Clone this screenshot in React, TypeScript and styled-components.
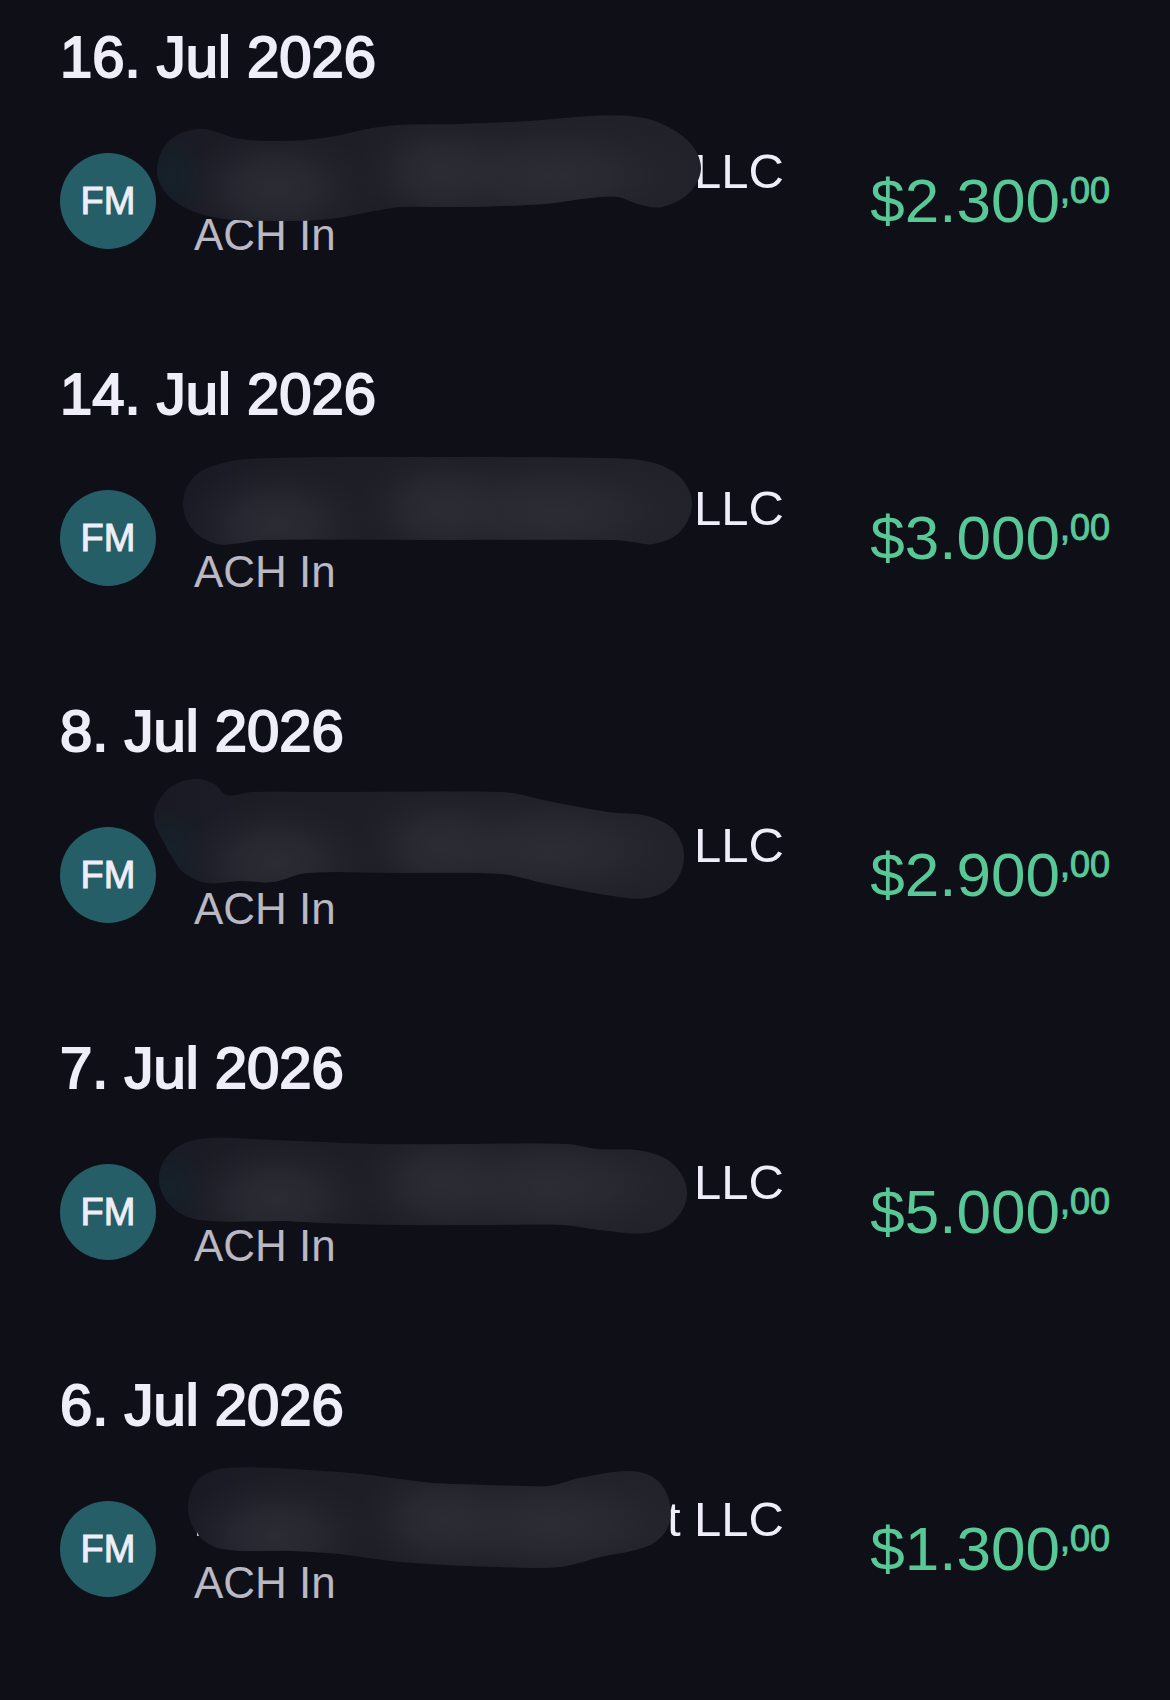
import React from "react";
import styled, { createGlobalStyle } from "styled-components";

const GlobalStyle = createGlobalStyle`
  *, *::before, *::after { box-sizing: border-box; }
  html { background: #0f0f18; }
  body {
    margin: 0;
    background: #0f0f18;
    color: #eeedf8;
    font-family: "Liberation Sans", Arial, Helvetica, sans-serif;
  }
`;

const Feed = styled.main`
  display: flex;
  flex-direction: column;
  gap: 94px;
  min-height: 100vh;
  padding: 25px 60px 40px;
`;

const Day = styled.section`
  display: flex;
  flex-direction: column;
  gap: 45px;
`;

const DayTitle = styled.h2`
  margin: 0;
  font-size: 58px;
  line-height: 64px;
  font-weight: 400;
  -webkit-text-stroke: 2px currentColor;
`;

const Transaction = styled.article`
  position: relative;
  display: flex;
  align-items: center;
  gap: 38px;
`;

const Avatar = styled.span`
  display: grid;
  place-items: center;
  flex: none;
  width: 96px;
  height: 96px;
  border-radius: 50%;
  background: #265e68;
  font-size: 38px;
  line-height: 44px;
  -webkit-text-stroke: 1px currentColor;
`;

const Details = styled.div`
  flex: 0 1 590px;
  padding-top: 6px;
  white-space: nowrap;
`;

const Payer = styled.p`
  margin: 0;
  font-size: 49px;
  line-height: 62px;
  text-align: right;
`;

const Method = styled.p`
  margin: 0;
  color: #b9b8c3;
  font-size: 44px;
  line-height: 66px;
`;

const Amount = styled.p`
  display: flex;
  align-items: flex-start;
  margin: 0 0 0 auto;
  color: #57c896;
  font-size: 62px;
  line-height: 62px;
`;

const Cents = styled.span`
  font-size: 36px;
  line-height: 42px;
  -webkit-text-stroke: 1px currentColor;
`;

const Smudge = styled.svg`
  position: absolute;
  left: 90px;
  top: -34px;
  width: 560px;
  height: 140px;
  pointer-events: none;
`;

type Point = [number, number];

interface Entry {
  date: string;
  payer: string;
  whole: string;
  tinted: boolean;
  outline: Point[];
  speck?: string;
}

const entries: Entry[] = [
  {
    date: "16. Jul 2026",
    payer: "LLC",
    whole: "$2.300",
    tinted: true,
    outline: [
      [157, 170], [169, 141], [200, 129], [240, 139], [282, 141], [323, 138], [387, 126], [460, 124], [530, 121],
      [590, 116], [630, 116], [660, 123], [690, 143], [701, 168], [690, 192], [662, 207], [638, 204],
      [618, 197], [590, 198], [545, 204], [465, 207], [400, 207], [380, 210], [330, 219], [280, 221],
      [225, 219], [190, 210], [166, 193],
    ],
  },
  {
    date: "14. Jul 2026",
    payer: "LLC",
    whole: "$3.000",
    tinted: false,
    outline: [
      [183, 166], [195, 139], [227, 125], [273, 121], [400, 120], [600, 121], [650, 125], [680, 140],
      [692, 166], [680, 195], [653, 207], [633, 205], [615, 203], [450, 203], [260, 203], [240, 206],
      [217, 207], [193, 193],
    ],
  },
  {
    date: "8. Jul 2026",
    payer: "LLC",
    whole: "$2.900",
    tinted: true,
    outline: [
      [154, 143], [167, 116], [193, 105], [214, 110], [227, 121], [253, 118], [340, 118], [500, 118], [523, 121],
      [543, 126], [607, 138], [647, 142], [674, 156], [684, 183], [673, 211], [647, 224], [613, 222],
      [543, 209], [510, 201], [480, 199], [400, 199], [307, 199], [273, 208], [240, 207], [207, 209],
      [183, 198], [172, 183], [166, 172],
    ],
  },
  {
    date: "7. Jul 2026",
    payer: "LLC",
    whole: "$5.000",
    tinted: true,
    outline: [
      [159, 169], [170, 142], [200, 128], [273, 129], [373, 133], [470, 133], [567, 133], [597, 138],
      [643, 140], [673, 153], [687, 181], [675, 209], [647, 222], [600, 219], [563, 214], [480, 214],
      [400, 214], [323, 212], [287, 210], [200, 209], [172, 196],
    ],
  },
  {
    date: "6. Jul 2026",
    payer: "t LLC",
    whole: "$1.300",
    tinted: false,
    speck: "M197 184l2 4h-2z",
    outline: [
      [188, 160], [198, 132], [227, 120], [340, 124], [407, 132], [433, 135], [523, 138], [550, 138],
      [580, 130], [630, 123], [657, 132], [670, 156], [667, 181], [648, 198], [600, 209], [560, 219],
      [500, 219], [400, 214], [340, 206], [293, 203], [223, 201], [198, 187],
    ],
  },
];

// Closed Catmull-Rom curve through the outline points.
function smoothPath(points: Point[]): string {
  const n = points.length;
  const at = (i: number) => points[(i + n) % n];
  let d = `M${points[0].join(" ")}`;
  for (let i = 0; i < n; i++) {
    const [p0, p1, p2, p3] = [at(i - 1), at(i), at(i + 1), at(i + 2)];
    const reach = Math.hypot(p2[0] - p1[0], p2[1] - p1[1]);
    const control = (a: Point, b: Point, from: Point, sign: number) => {
      const length = Math.hypot(b[0] - a[0], b[1] - a[1]) || 1;
      const k = (sign * reach) / (3 * length);
      return `${(from[0] + (b[0] - a[0]) * k).toFixed(1)} ${(from[1] + (b[1] - a[1]) * k).toFixed(1)}`;
    };
    d += `C${control(p0, p2, p1, 1)} ${control(p1, p3, p2, -1)} ${p2.join(" ")}`;
  }
  return `${d}Z`;
}

function Redaction({ entry, id }: { entry: Entry; id: string }) {
  const d = smoothPath(entry.outline);
  return (
    <Smudge viewBox="150 100 560 140" aria-hidden="true">
      <defs>
        <radialGradient id={`${id}-glow`}>
          <stop offset="0" stopColor="#2f2f38" stopOpacity="0.8" />
          <stop offset="0.4" stopColor="#2e2e37" stopOpacity="0.6" />
          <stop offset="0.7" stopColor="#2b2b34" stopOpacity="0.25" />
          <stop offset="1" stopColor="#282831" stopOpacity="0" />
        </radialGradient>
        <radialGradient id={`${id}-tint`}>
          <stop offset="0" stopColor="#14232c" stopOpacity="0.8" />
          <stop offset="1" stopColor="#14232c" stopOpacity="0" />
        </radialGradient>
        <linearGradient id={`${id}-base`} x1="0" x2="1" y1="0" y2="0">
          <stop offset="0" stopColor="#191a23" />
          <stop offset="0.2" stopColor="#1d1d26" />
          <stop offset="1" stopColor="#22222b" />
        </linearGradient>
        <clipPath id={`${id}-clip`}>
          <path d={d} />
        </clipPath>
      </defs>
      <path d={d} fill={`url(#${id}-base)`} />
      <g clipPath={`url(#${id}-clip)`}>
        <ellipse cx="276" cy="188" rx="100" ry="62" fill={`url(#${id}-glow)`} />
        <ellipse cx="440" cy="172" rx="84" ry="60" fill={`url(#${id}-glow)`} />
        <ellipse cx="550" cy="176" rx="150" ry="60" fill={`url(#${id}-glow)`} />
        {entry.tinted && <ellipse cx="168" cy="176" rx="42" ry="46" fill={`url(#${id}-tint)`} />}
      </g>
      {entry.speck && <path d={entry.speck} fill="#c9c8d2" />}
    </Smudge>
  );
}

export default function App() {
  return (
    <>
      <GlobalStyle />
      <Feed>
        {entries.map((entry, index) => (
          <Day key={entry.date}>
            <DayTitle>{entry.date}</DayTitle>
            <Transaction>
              <Avatar>FM</Avatar>
              <Details>
                <Payer>{entry.payer}</Payer>
                <Method>ACH In</Method>
              </Details>
              <Amount>
                {entry.whole}
                <Cents>,00</Cents>
              </Amount>
              <Redaction entry={entry} id={`smudge-${index}`} />
            </Transaction>
          </Day>
        ))}
      </Feed>
    </>
  );
}
